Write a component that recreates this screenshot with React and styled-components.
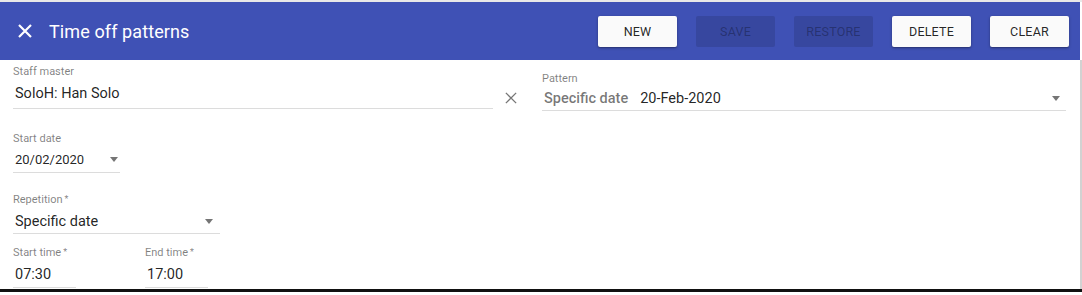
import React from "react";
import styled, { createGlobalStyle } from "styled-components";

const Global = createGlobalStyle`
  html, body { margin: 0; padding: 0; background: #fff; }
  body { font-family: Roboto, "Noto Sans", Arial, sans-serif; }
  * { box-sizing: border-box; }
`;

const Frame = styled.div`
  width: 1082px;
  height: 295px;
  border-top: 2px solid #e8e8e8;
  overflow: hidden;
`;

const Panel = styled.div`
  width: 1082px;
  height: 290px;
  border-bottom: 3px solid #111;
  display: flex;
  flex-direction: column;
`;

const Header = styled.header`
  width: 1080px;
  height: 58px;
  flex: none;
  background: #3f51b5;
  display: flex;
  align-items: center;
  padding-left: 18px;
  padding-right: 11px;
`;

const CloseBtn = styled.button`
  background: none;
  border: 0;
  padding: 0;
  width: 14px;
  height: 14px;
  display: flex;
  align-items: center;
  justify-content: center;
  color: #fff;
  cursor: pointer;
`;

const Title = styled.h1`
  margin: 0 0 0 17px;
  font-size: 18px;
  font-weight: 400;
  color: #fff;
  letter-spacing: 0.1px;
  flex: 1;
`;

const Actions = styled.div`
  display: flex;
  gap: 19px;
`;

const ActionButton = styled.button`
  width: 79px;
  height: 31px;
  border: 0;
  border-radius: 2px;
  font-family: Roboto, sans-serif;
  font-size: 12.5px;
  font-weight: 400;
  letter-spacing: 0.2px;
  text-transform: uppercase;
  background: ${(p) => (p.disabled ? "rgba(0,0,0,0.12)" : "#fafafa")};
  color: ${(p) => (p.disabled ? "rgba(0,0,0,0.3)" : "rgba(0,0,0,0.87)")};
  box-shadow: ${(p) =>
    p.disabled ? "none" : "0 1px 3px rgba(0,0,0,0.3), 0 1px 1px rgba(0,0,0,0.14)"};
`;

const Body = styled.div`
  flex: 1;
  display: flex;
  padding-left: 13px;
  border-right: 2px solid #d2d2d2;
`;

const LeftCol = styled.div`
  width: 529px;
  display: flex;
  flex-direction: column;
`;

const RightCol = styled.div`
  width: 524px;
  padding-top: 13px;
`;

const Field = styled.div`
  width: ${(p) => p.$w}px;
  margin-top: ${(p) => p.$mt || 0}px;
  border-bottom: 1px solid #dcdcdc;
  display: flex;
  flex-direction: column;
`;

const Label = styled.label`
  font-size: 11px;
  color: rgba(0,0,0,0.5);
  line-height: 11px;
  height: 13px;
  white-space: nowrap;
`;

const Req = styled.span`
  font-size: 9px;
  vertical-align: top;
  margin-left: 2px;
`;

const ValueRow = styled.div`
  display: flex;
  align-items: center;
  height: ${(p) => p.$h || 26}px;
  padding-left: 2px;
  padding-top: ${(p) => p.$pt || 0}px;
  padding-bottom: ${(p) => p.$pb || 0}px;
  padding-right: ${(p) => p.$pr || 0}px;
`;

const Value = styled.span`
  flex: 1;
  font-size: ${(p) => p.$fs || 14.5}px;
  color: rgba(0,0,0,0.87);
  white-space: nowrap;
`;

const Prefix = styled.span`
  font-size: 14.5px;
  font-weight: 500;
  color: rgba(0,0,0,0.54);
  margin-right: 12px;
`;

const Caret = styled.span`
  width: 0;
  height: 0;
  border-left: 4.5px solid transparent;
  border-right: 4.5px solid transparent;
  border-top: 5px solid rgba(0,0,0,0.54);
`;

const StaffRow = styled.div`
  display: flex;
  align-items: flex-end;
  margin-top: 6px;
`;

const ClearIcon = styled.span`
  margin-left: 12px;
  margin-bottom: 5px;
  display: flex;
  color: rgba(0,0,0,0.54);
`;

const TimeRow = styled.div`
  display: flex;
  gap: 69px;
  margin-top: 13px;
`;

const XGlyph = ({ size = 14, stroke = 2 }) => (
  <svg width={size} height={size} viewBox="0 0 14 14">
    <path d="M1 1 L13 13 M13 1 L1 13" stroke="currentColor" strokeWidth={stroke} />
  </svg>
);

export default function App() {
  return (
    <>
      <Global />
      <Frame>
        <Panel>
          <Header>
            <CloseBtn aria-label="close">
              <XGlyph size={14} stroke={2.2} />
            </CloseBtn>
            <Title>Time off patterns</Title>
            <Actions>
              <ActionButton>New</ActionButton>
              <ActionButton disabled>Save</ActionButton>
              <ActionButton disabled>Restore</ActionButton>
              <ActionButton>Delete</ActionButton>
              <ActionButton>Clear</ActionButton>
            </Actions>
          </Header>
          <Body>
            <LeftCol>
              <StaffRow>
                <Field $w={480}>
                  <Label>Staff master</Label>
                  <ValueRow $h={29} $pb={1}>
                    <Value>SoloH: Han Solo</Value>
                  </ValueRow>
                </Field>
                <ClearIcon>
                  <XGlyph size={12} stroke={1.5} />
                </ClearIcon>
              </StaffRow>
              <Field $w={107} $mt={24}>
                <Label>Start date</Label>
                <ValueRow $h={26} $pr={2}>
                  <Value $fs={13}>20/02/2020</Value>
                  <Caret />
                </ValueRow>
              </Field>
              <Field $w={207} $mt={21}>
                <Label>
                  Repetition<Req>*</Req>
                </Label>
                <ValueRow $h={26} $pt={3} $pr={7}>
                  <Value>Specific date</Value>
                  <Caret />
                </ValueRow>
              </Field>
              <TimeRow>
                <Field $w={63}>
                  <Label>
                    Start time<Req>*</Req>
                  </Label>
                  <ValueRow $h={27} $pt={1}>
                    <Value>07:30</Value>
                  </ValueRow>
                </Field>
                <Field $w={63}>
                  <Label>
                    End time<Req>*</Req>
                  </Label>
                  <ValueRow $h={27} $pt={1}>
                    <Value>17:00</Value>
                  </ValueRow>
                </Field>
              </TimeRow>
            </LeftCol>
            <RightCol>
              <Field $w={524}>
                <Label>Pattern</Label>
                <ValueRow $h={24} $pr={6}>
                  <Value>
                    <Prefix>Specific date</Prefix>20-Feb-2020
                  </Value>
                  <Caret />
                </ValueRow>
              </Field>
            </RightCol>
          </Body>
        </Panel>
      </Frame>
    </>
  );
}
